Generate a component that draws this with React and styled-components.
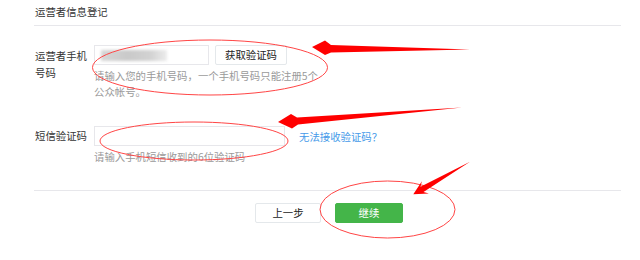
import React from 'react'
import styled, { createGlobalStyle } from 'styled-components'

const Global = createGlobalStyle`
  body {
    margin: 0;
    background: #fff;
    font-family: "Noto Sans CJK SC", "Noto Sans", sans-serif;
  }
`

const Page = styled.div`
  position: relative;
  width: 640px;
  height: 260px;
  box-sizing: border-box;
  padding: 0 19px 0 34px;
  overflow: hidden;
`

const Title = styled.div`
  font-size: 10.4px;
  line-height: 23px;
  padding: 0 0 2px 1px;
  color: #353535;
  border-bottom: 1px solid #e7e7eb;
`

const Form = styled.div`
  padding-top: 19px;
`

const Row = styled.div`
  display: grid;
  grid-template-columns: 60px 1fr;
  align-items: start;
  margin-bottom: ${p => p.$gap || 0}px;
`

const Label = styled.div`
  grid-row: span 2;
  font-size: 10.4px;
  line-height: ${p => (p.$single ? '20px' : '17px')};
  padding: ${p => (p.$single ? '0' : '2px')} 0 0 1px;
  color: #353535;
`

const Controls = styled.div`
  display: flex;
  align-items: center;
  gap: ${p => p.$gap || 6}px;
`

const InputBox = styled.div`
  display: flex;
  align-items: center;
  box-sizing: border-box;
  width: ${p => p.$width}px;
  height: 20px;
  border: 1px solid #e7e7eb;
  background: #fff;
`

const Masked = styled.span`
  margin-left: 6px;
  width: 66px;
  height: 11px;
  background: linear-gradient(90deg, #d6d6d6 0%, #c9c9c9 40%, #d2d2d2 75%, #ececec 100%);
  filter: blur(1.4px);
`

const Button = styled.button`
  box-sizing: border-box;
  width: ${p => p.$width}px;
  height: 20px;
  padding: 0;
  font-family: inherit;
  font-size: 10.4px;
  line-height: 18px;
  border: 1px solid ${p => (p.$primary ? '#44b549' : '#e4e8eb')};
  border-radius: 2px;
  background: ${p => (p.$primary ? '#44b549' : '#fff')};
  color: ${p => (p.$primary ? '#fff' : '#222')};
`

const Link = styled.a`
  font-size: 10.4px;
  color: #459ae9;
  text-decoration: none;
  margin-left: 8px;
`

const Help = styled.div`
  grid-column: 2;
  max-width: 226px;
  margin-top: 3px;
  font-size: 10.4px;
  line-height: 16px;
  color: #9a9a9a;
`

const Footer = styled.div`
  margin-top: 25px;
  padding-top: 12px;
  border-top: 1px solid #e7e7eb;
  display: flex;
  justify-content: center;
  gap: 14px;
  padding-left: 3px;
`

const Annotations = styled.svg`
  position: absolute;
  top: 0;
  left: 0;
  pointer-events: none;
`

export default function App() {
  return (
    <>
      <Global />
      <Page>
        <Title>运营者信息登记</Title>
        <Form>
          <Row $gap={26}>
            <Label>运营者手机<br />号码</Label>
            <Controls>
              <InputBox $width={115}><Masked /></InputBox>
              <Button $width={72}>获取验证码</Button>
            </Controls>
            <Help>请输入您的手机号码，一个手机号码只能注册5个公众帐号。</Help>
          </Row>
          <Row>
            <Label $single>短信验证码</Label>
            <Controls $gap={6}>
              <InputBox $width={191} />
              <Link>无法接收验证码？</Link>
            </Controls>
            <Help>请输入手机短信收到的6位验证码</Help>
          </Row>
        </Form>
        <Footer>
          <Button $width={66}>上一步</Button>
          <Button $width={68} $primary>继续</Button>
        </Footer>

        <Annotations width="640" height="260" viewBox="0 0 640 260">
          <g fill="none" stroke="#ff4545" strokeWidth="1">
            <ellipse cx="210" cy="67.5" rx="117.5" ry="27.5" />
            <ellipse cx="194" cy="141" rx="94" ry="19" />
            <ellipse cx="387.5" cy="209.5" rx="67.5" ry="28.5" />
          </g>
          <g fill="#ff0000">
            <polygon points="312,47 325,40.5 331,45 470,49.5 331,52.5 325,55" />
            <polygon points="278,122 291,114 297,117.5 462,107.5 298,124.5 292,128.5" />
            <polygon points="413.3,194.3 421.9,181.2 420.5,186.7 470,161.7 423.5,191.9 428.9,193.4" />
          </g>
        </Annotations>
      </Page>
    </>
  )
}
